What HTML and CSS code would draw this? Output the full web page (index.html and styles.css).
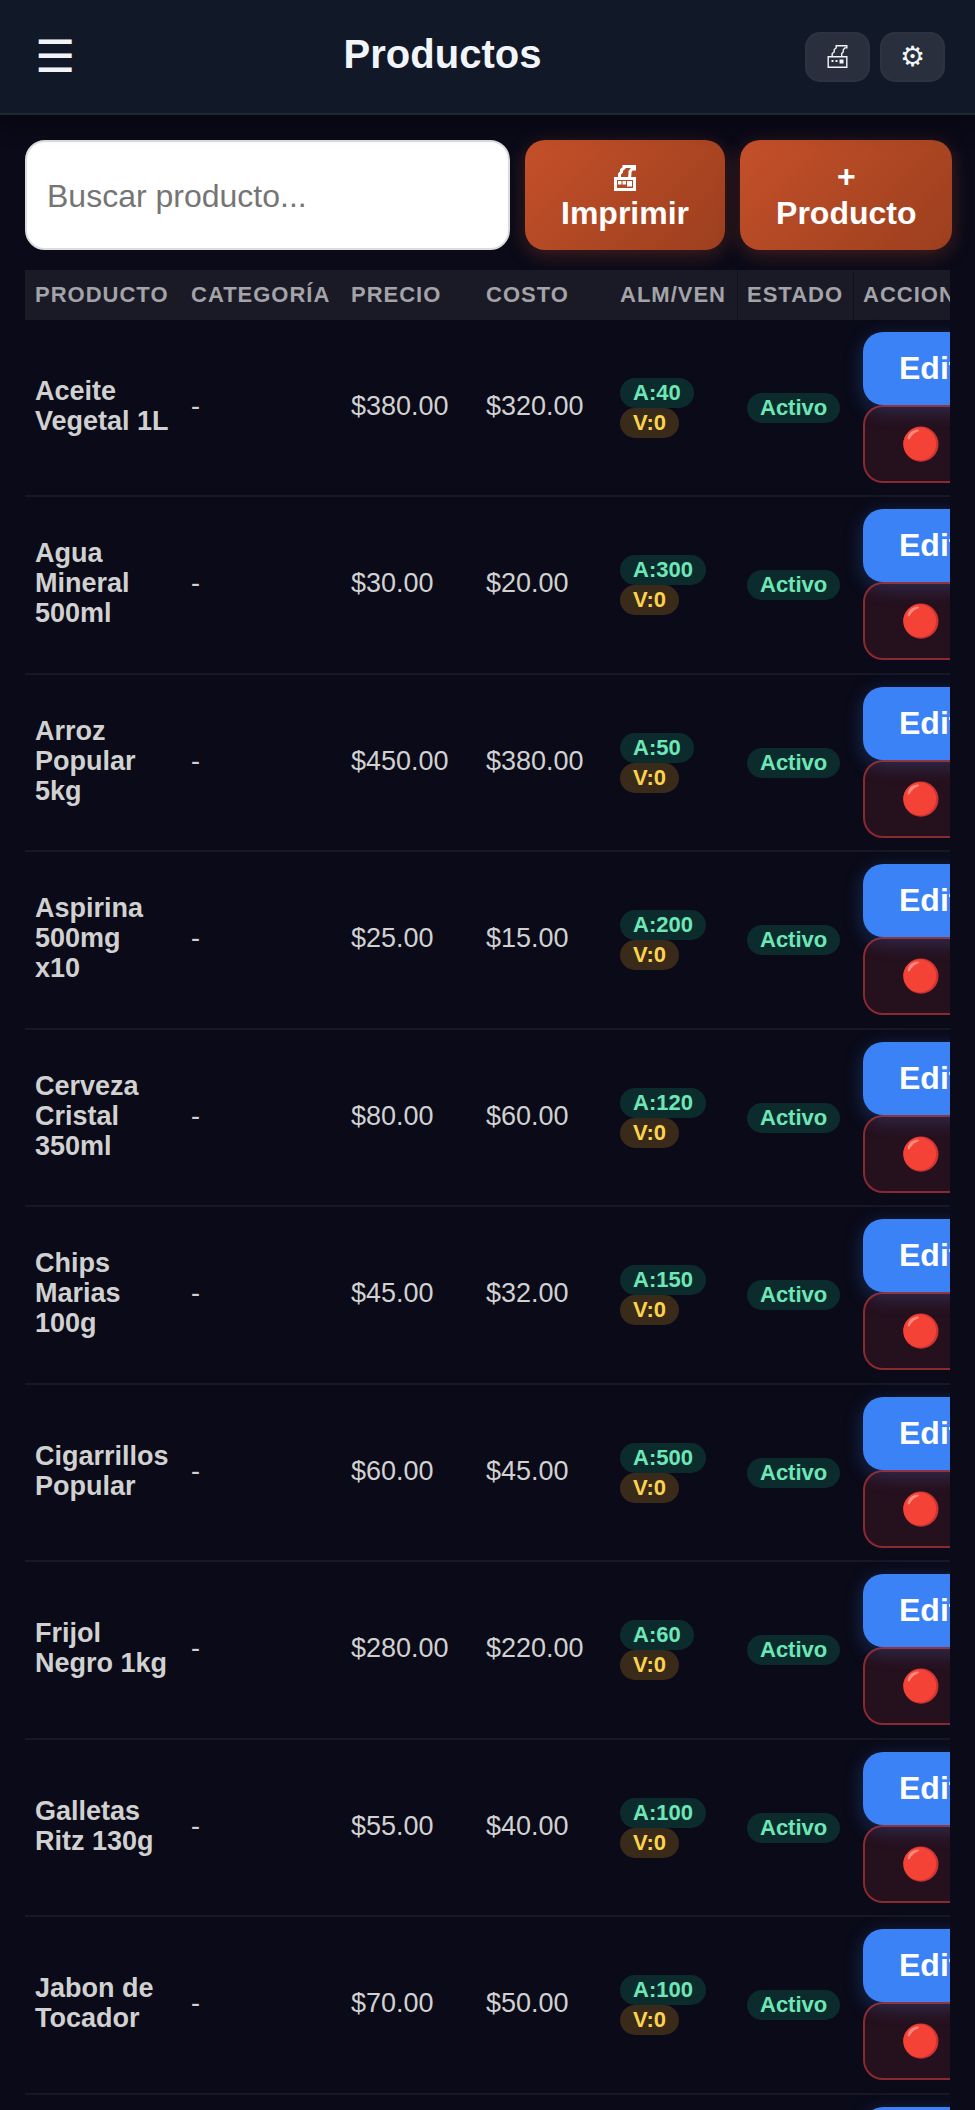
FILE: index.html
```html
<!DOCTYPE html>
<html lang="es">
<head>
    <meta charset="UTF-8">
    <meta name="viewport" content="width=device-width, initial-scale=1.0">
    <title>Productos</title>
    <link rel="stylesheet" href="styles.css">
</head>
<body>
    <header class="topbar">
        <button class="menu-btn" type="button" aria-label="Menú">☰</button>
        <h1>Productos</h1>
        <div class="topbar-actions">
            <button class="icon-btn" type="button" aria-label="Imprimir">
                <svg class="printer" viewBox="0 0 20 23" fill="none" stroke="currentColor" stroke-width="1.4">
                    <path d="M.7 11.7h18.6v10.6H.7z"/>
                    <path d="M4.7 11.5V8.5L6.7 7V4.5L8.7 3V.7h10.6v2.2h-2L15.7 5v2l-1.5 1.5v3"/>
                    <path d="M4 15h2v2H4zM8 15h2v2H8zM12 14.5h4v4h-4z" fill="currentColor" stroke="none"/>
                </svg>
            </button>
            <button class="icon-btn" type="button" aria-label="Configuración">⚙</button>
        </div>
    </header>

    <main class="content">
        <div class="toolbar">
            <input class="search" type="text" id="buscar" placeholder="Buscar producto..." aria-label="Buscar producto">
            <button class="btn btn-primary" type="button">
                <svg class="printer-bold" viewBox="0 0 22 26" fill="none" stroke="currentColor" stroke-width="3">
                    <path d="M1.5 13.5h19v11h-19z"/>
                    <path d="M5.5 13V9l2-2V5l2.5-2V1.5h10.5V4H18l-2 2.5v2L15.5 13"/>
                    <path d="M4 16h3.5v3.5H4zM8.500 16H12v3.500H8.500zM13 16h5v5.500h-5z" fill="currentColor" stroke="none"/>
                </svg><br>Imprimir</button>
            <button class="btn btn-primary" type="button">+<br>Producto</button>
        </div>

        <div class="table-wrap">
            <table class="table">
                <colgroup>
                    <col class="col-producto">
                    <col class="col-categoria">
                    <col class="col-precio">
                    <col class="col-costo">
                    <col class="col-stock">
                    <col class="col-estado">
                    <col class="col-acciones">
                </colgroup>
                <thead>
                    <tr>
                        <th>Producto</th>
                        <th>Categoría</th>
                        <th>Precio</th>
                        <th>Costo</th>
                        <th>Alm/Ven</th>
                        <th class="sep">Estado</th>
                        <th class="sep">Acciones</th>
                    </tr>
                </thead>
                <tbody id="productos"></tbody>
            </table>
        </div>
    </main>

    <script>
        const productos = [
            { nombre: 'Aceite Vegetal 1L', precio: 380, costo: 320, almacen: 40, venta: 0 },
            { nombre: 'Agua Mineral 500ml', precio: 30, costo: 20, almacen: 300, venta: 0 },
            { nombre: 'Arroz Popular 5kg', precio: 450, costo: 380, almacen: 50, venta: 0 },
            { nombre: 'Aspirina 500mg x10', precio: 25, costo: 15, almacen: 200, venta: 0 },
            { nombre: 'Cerveza Cristal 350ml', precio: 80, costo: 60, almacen: 120, venta: 0 },
            { nombre: 'Chips Marias 100g', precio: 45, costo: 32, almacen: 150, venta: 0 },
            { nombre: 'Cigarrillos Popular', precio: 60, costo: 45, almacen: 500, venta: 0 },
            { nombre: 'Frijol Negro 1kg', precio: 280, costo: 220, almacen: 60, venta: 0 },
            { nombre: 'Galletas Ritz 130g', precio: 55, costo: 40, almacen: 100, venta: 0 },
            { nombre: 'Jabon de Tocador', precio: 70, costo: 50, almacen: 100, venta: 0 },
            { nombre: 'Leche en Polvo 1kg', precio: 1200, costo: 1000, almacen: 30, venta: 0 }
        ];

        // Pintar filas
        document.getElementById('productos').innerHTML = productos.map(p => `
            <tr>
                <td class="texto nombre">${p.nombre}</td>
                <td class="texto">-</td>
                <td class="texto">$${p.precio.toFixed(2)}</td>
                <td class="texto">$${p.costo.toFixed(2)}</td>
                <td>
                    <span class="badge badge-green">A:${p.almacen}</span><br>
                    <span class="badge badge-yellow">V:${p.venta}</span>
                </td>
                <td><span class="badge badge-green">Activo</span></td>
                <td>
                    <button class="btn btn-edit" type="button">Editar</button>
                    <button class="btn btn-danger" type="button" aria-label="Desactivar">🔴</button>
                </td>
            </tr>
        `).join('');
    </script>
</body>
</html>
```
FILE: styles.css
```css
* {
    box-sizing: border-box;
}
body {
    margin: 0;
    height: 100vh;
    overflow: hidden;
    display: flex;
    flex-direction: column;
    font-family: "Liberation Sans", Arial, sans-serif;
    background: #0a0a18;
    color: #f1f5f9;
}
button, input {
    font-family: inherit;
}
button {
    cursor: pointer;
}

/* Barra superior */
.topbar {
    display: flex;
    align-items: center;
    justify-content: space-between;
    min-height: 115px;
    padding: 0 30px;
    background: #111827;
    border-bottom: 2px solid #1f2733;
    box-shadow: 0 5px 25px rgba(0, 0, 0, 0.4);
    z-index: 1;
}
.topbar h1 {
    margin: 0 0 6px;
    font-size: 40px;
    line-height: 46px;
}
.menu-btn {
    width: 50px;
    padding: 0;
    border: none;
    background: none;
    color: #f1f5f9;
    font-size: 45px;
    line-height: 50px;
}
.topbar-actions {
    display: flex;
    gap: 10px;
}
.icon-btn {
    height: 50px;
    padding: 0 18px;
    border: 2px solid rgba(255, 255, 255, 0.02);
    border-radius: 15px;
    background: rgba(255, 255, 255, 0.1);
    color: #f1f5f9;
    font-size: 28px;
    line-height: 30px;
}
.printer {
    display: block;
    width: 25px;
    height: 23px;
}
.printer-bold {
    width: 22px;
    height: 26px;
    vertical-align: -4px;
}

/* Contenido */
.content {
    flex: 1;
    min-height: 0;
    padding: 25px;
}
.toolbar {
    display: flex;
    gap: 15px;
    margin-bottom: 20px;
}
.search {
    flex: 1 0 485px;
    width: 485px;
    height: 110px;
    padding: 2px 20px 0;
    border: 2px solid #ddd;
    border-radius: 20px;
    background: #fff;
    font-size: 32px;
}
.search::placeholder {
    color: #757575;
}
.btn {
    display: block;
    padding: 18px 36px;
    border: none;
    border-radius: 20px;
    color: #fff;
    font-size: 32px;
    font-weight: bold;
    line-height: 37px;
}
.btn-primary {
    background: linear-gradient(135deg, #c4502a, #9c3f1e);
    box-shadow: 0 5px 20px rgba(196, 80, 42, 0.3);
}
.btn-edit {
    background: #3b82f6;
    box-shadow: 0 5px 20px rgba(59, 130, 246, 0.3);
}
.btn-danger {
    border: 2px solid rgba(239, 68, 68, 0.5);
    background: rgba(239, 68, 68, 0.12);
    line-height: 38px;
}

/* Tabla */
.table-wrap {
    overflow: hidden;
}
.table {
    width: 1010px;
    table-layout: fixed;
    border-collapse: separate;
    border-spacing: 0;
    font-size: 27px;
    line-height: 30px;
    color: #d1d1d1;
}
.col-producto { width: 156px; }
.col-categoria { width: 160px; }
.col-precio { width: 135px; }
.col-costo { width: 134px; }
.col-stock { width: 127px; }
.col-estado { width: 116px; }
th {
    padding: 10px;
    background: #1a1a26;
    color: #a3a3a8;
    font-size: 22px;
    letter-spacing: 1px;
    text-align: left;
    text-transform: uppercase;
    white-space: nowrap;
}
th.sep {
    box-shadow: inset 1px 0 #12121e;
}
td {
    padding: 12px 10px;
    border-bottom: 2px solid #181824;
    vertical-align: middle;
}
tr:nth-child(even) td {
    padding-bottom: 13px;
}
td.texto,
tr:nth-child(even) td.texto {
    padding-bottom: 16px;
}
.nombre {
    font-weight: bold;
}
.badge {
    display: inline-block;
    padding: 0 13px;
    border-radius: 15px;
    font-size: 22px;
    font-weight: bold;
    line-height: 30px;
    vertical-align: top;
}
.badge-green {
    background: #0c2b2d;
    color: #6ee7b7;
}
.badge-yellow {
    background: #3a2a1a;
    color: #fcd34d;
}
```
